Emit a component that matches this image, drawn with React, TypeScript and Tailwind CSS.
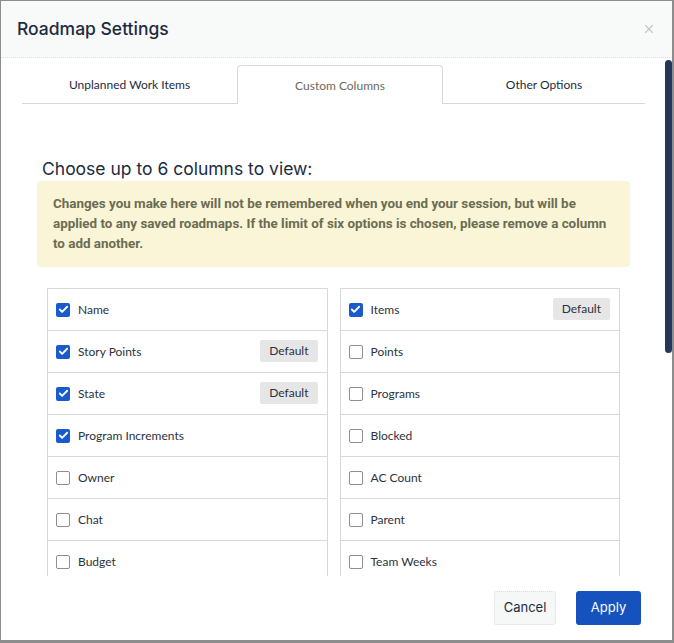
import { Check, X } from 'lucide-react';

const left = [
  { label: 'Name', checked: true, def: false },
  { label: 'Story Points', checked: true, def: true },
  { label: 'State', checked: true, def: true },
  { label: 'Program Increments', checked: true, def: false },
  { label: 'Owner', checked: false, def: false },
  { label: 'Chat', checked: false, def: false },
  { label: 'Budget', checked: false, def: false },
];

const right = [
  { label: 'Items', checked: true, def: true },
  { label: 'Points', checked: false, def: false },
  { label: 'Programs', checked: false, def: false },
  { label: 'Blocked', checked: false, def: false },
  { label: 'AC Count', checked: false, def: false },
  { label: 'Parent', checked: false, def: false },
  { label: 'Team Weeks', checked: false, def: false },
];

type Col = { label: string; checked: boolean; def: boolean };

function Box({ checked }: { checked: boolean }) {
  if (checked) {
    return (
      <span className="flex h-[14px] w-[14px] shrink-0 items-center justify-center rounded-[2px] bg-[#1a5bcc]">
        <Check className="h-[11px] w-[11px] text-white" strokeWidth={4} />
      </span>
    );
  }
  return <span className="h-[14px] w-[14px] shrink-0 rounded-[2px] border border-[#8e8e8e] bg-white" />;
}

function ColumnList({ items }: { items: Col[] }) {
  return (
    <div className="border border-[#d8d8d8] border-b-0">
      {items.map((c) => (
        <div key={c.label} className="flex h-[42px] items-center border-b border-[#d8d8d8] pl-[8px] pr-[9px]">
          <Box checked={c.checked} />
          <span className="ml-[8px] text-[12px] text-[#2b3240]">{c.label}</span>
          {c.def && (
            <span className="ml-auto -mt-[2px] rounded-[2px] bg-[#e6e6e6] px-[9px] py-[2px] text-[12px] text-[#2b3240]">
              Default
            </span>
          )}
        </div>
      ))}
    </div>
  );
}

export default function App() {
  return (
    <div className="h-[643px] w-[674px] overflow-hidden bg-[#8d8d8d] pl-[1px] pt-[1px]" style={{ fontFamily: 'Lato, "Noto Sans", sans-serif' }}>
      <div className="relative flex h-[639px] w-[671px] flex-col overflow-hidden bg-white">
        <div className="flex h-[57px] shrink-0 items-center justify-between border-b border-dotted border-[#dcdcdc] bg-[#f8f9f9] pl-[16px] pr-[16px]">
          <h1 className="text-[17.5px] font-medium text-[#1d2b40]" style={{ fontFamily: 'Inter, sans-serif' }}>
            Roadmap Settings
          </h1>
          <X className="h-[14px] w-[14px] text-[#c4c4c4]" strokeWidth={2} />
        </div>

        <div className="flex min-h-0 flex-1 flex-col overflow-hidden pl-[21px] pr-[27px] pt-[7px]">
          <div className="flex h-[39px] shrink-0 text-[12px]">
            <div className="flex w-[215px] items-center justify-center border-b border-[#d8d8d8] pt-[1px] text-[#1d2b40]">Unplanned Work Items</div>
            <div className="flex w-[206px] items-center justify-center rounded-t-[4px] border border-b-0 border-[#d8d8d8] pt-[1px] text-[#6b6b5c]">Custom Columns</div>
            <div className="flex flex-1 items-center justify-center border-b border-[#d8d8d8] pt-[1px] text-[#1d2b40]">Other Options</div>
          </div>

          <div className="pl-[15px] pr-[15px] pt-[54px]">
            <h2 className="pl-[5px] text-[17.5px] leading-[22px] text-[#1d2b40]" style={{ fontFamily: 'Inter, sans-serif' }}>
              Choose up to 6 columns to view:
            </h2>
            <div
              className="mt-[1px] rounded-[4px] bg-[#faf5d7] px-[16px] py-[13px] text-[13.4px] font-bold leading-[20px] text-[#6c6c52]"
              style={{ fontFamily: 'Roboto, sans-serif' }}
            >
              Changes you make here will not be remembered when you end your session, but will be applied to any saved roadmaps. If the limit of six options is chosen, please remove a column to add another.
            </div>
            <div className="mt-[21px] grid grid-cols-2 gap-[12px] pl-[10px] pr-[10px]">
              <ColumnList items={left} />
              <ColumnList items={right} />
            </div>
          </div>
        </div>

        <div className="flex h-[64px] shrink-0 items-center justify-end gap-[20px] pr-[31px] text-[13px]" style={{ fontFamily: 'Inter, sans-serif' }}>
          <button className="h-[34px] w-[62px] rounded-[3px] border border-dotted border-[#dcdcdc] bg-[#f6f7f7] text-[#1d2b40]">Cancel</button>
          <button className="h-[34px] w-[65px] rounded-[3px] bg-[#1552be] text-white">Apply</button>
        </div>

        <div className="absolute right-[0px] top-[59px] h-[293px] w-[7px] rounded-full bg-[#24365a]" />
      </div>
    </div>
  );
}
